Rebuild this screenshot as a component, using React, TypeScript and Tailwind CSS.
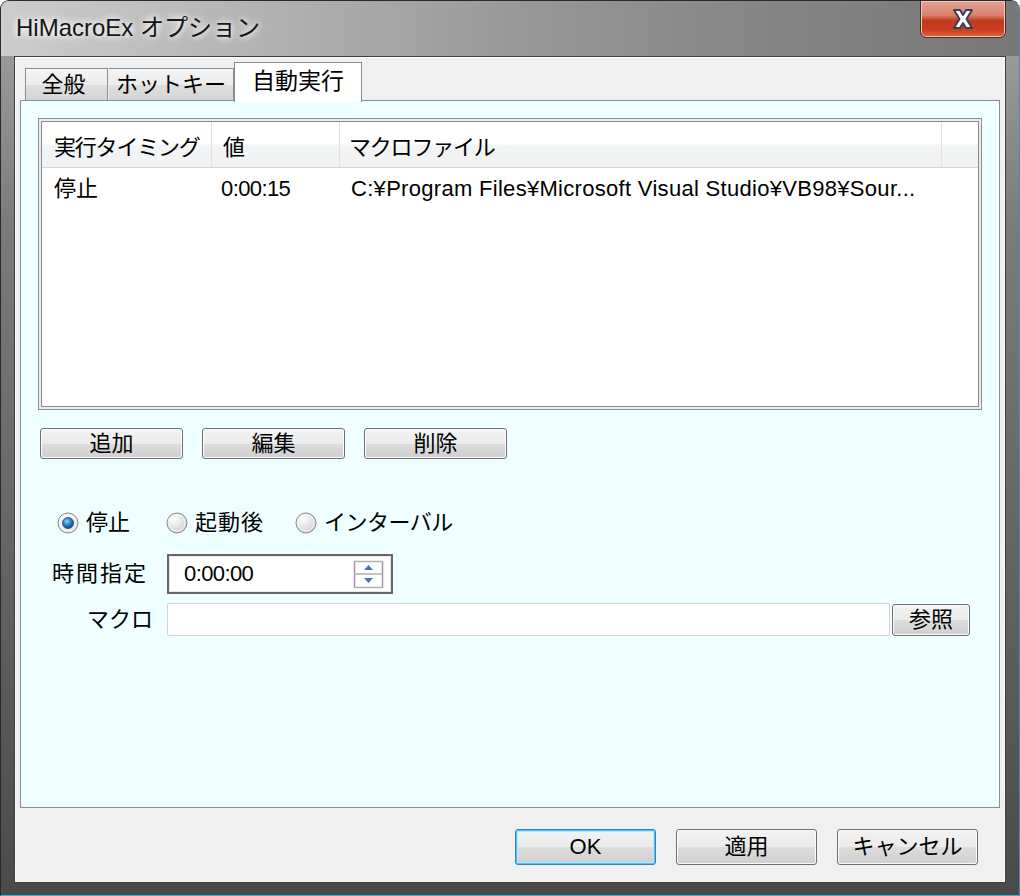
import React from "react";

const F = "font-['Liberation_Sans','Noto_Sans_CJK_JP',sans-serif]";

function Btn({
  children,
  className = "",
  focused = false,
}: {
  children: React.ReactNode;
  className?: string;
  focused?: boolean;
}) {
  return (
    <div
      className={`flex items-center justify-center rounded-[3px] border text-[22px] leading-none bg-[linear-gradient(180deg,#f2f2f2_0%,#ebebeb_50%,#dddddd_51%,#cfcfcf_100%)] ${
        focused
          ? "border-[#3c7fb1] shadow-[inset_0_0_0_1px_#48c6f5,inset_0_0_0_2px_#b9e6f9]"
          : "border-[#707070] shadow-[inset_0_0_0_1px_#fbfbfb]"
      } ${className}`}
    >
      {children}
    </div>
  );
}

function Radio({ checked }: { checked?: boolean }) {
  return (
    <svg width="22" height="22" viewBox="0 0 22 22" className="shrink-0">
      <defs>
        <radialGradient id={checked ? "rg1" : "rg0"} cx="0.35" cy="0.3" r="0.8">
          <stop offset="0" stopColor="#ffffff" />
          <stop offset="1" stopColor={checked ? "#dedede" : "#cccccc"} />
        </radialGradient>
        <radialGradient id="dot" cx="0.4" cy="0.35" r="0.7">
          <stop offset="0" stopColor="#8fd3ff" />
          <stop offset="0.5" stopColor="#2a7fc4" />
          <stop offset="1" stopColor="#0f3f78" />
        </radialGradient>
      </defs>
      <circle cx="11" cy="11" r="10" fill={`url(#${checked ? "rg1" : "rg0"})`} stroke="#8a8a8a" strokeWidth="1" />
      <circle cx="11" cy="11" r="8" fill="none" stroke="#ffffff" strokeOpacity="0.7" strokeWidth="1" />
      {checked && <circle cx="11" cy="11" r="5.5" fill="url(#dot)" stroke="#1b4a7c" strokeWidth="0.8" />}
    </svg>
  );
}

function Spin() {
  return (
    <svg width="32" height="32" viewBox="0 0 32 32" className="shrink-0">
      <line x1="1.5" y1="3" x2="1.5" y2="30" stroke="#9a9a9a" strokeWidth="1.5" />
      <line x1="29.5" y1="3" x2="29.5" y2="30" stroke="#9a9a9a" strokeWidth="1.5" />
      <line x1="1" y1="3.5" x2="30" y2="3.5" stroke="#b0b0b0" strokeWidth="1.5" />
      <line x1="1" y1="16" x2="30" y2="16" stroke="#b0b0b0" strokeWidth="1.5" />
      <line x1="1" y1="29.5" x2="30" y2="29.5" stroke="#b0b0b0" strokeWidth="1.5" />
      <polygon points="15.5,7 20,12 11,12" fill="#4a73b8" />
      <polygon points="15.5,25 20,20 11,20" fill="#4a73b8" />
    </svg>
  );
}

export default function App() {
  return (
    <div className={`w-[1020px] h-[896px] ${F} text-black`}>
      <div className="relative flex h-full w-full flex-col overflow-hidden rounded-t-[9px] border border-[#2a2a2a] border-b-[#2fb2dc] border-r-[#3a8fae] bg-[linear-gradient(180deg,#a3a3a3_0%,#7b7b7b_25%,#5f5f5f_70%,#4a4a4a_100%)]">
        {/* title bar */}
        <div className="flex h-[55px] shrink-0 items-start bg-[linear-gradient(90deg,#cdcdcd_0%,#b6b6b6_22%,#999999_50%,#858585_75%,#777777_100%)] pl-[15px] pt-[11px]">
          <span className="text-[24px] leading-[32px] text-[#151515] [text-shadow:0_0_6px_#ffffff,0_0_10px_#ffffff]">
            HiMacroEx オプション
          </span>
        </div>
        {/* close button */}
        <div className="absolute right-[13px] top-[-1px] flex h-[38px] w-[86px] items-center justify-center rounded-b-[6px] border border-[#4a2a24] bg-[linear-gradient(180deg,#e4a596_0%,#d8806c_40%,#c1391c_55%,#c8401f_80%,#e0643d_100%)] shadow-[inset_0_0_0_1px_#f0c8bc]">
          <svg width="34" height="26" viewBox="0 0 34 26">
            <path
              d="M8 4 L14 4 L17 9 L20 4 L26 4 L20.5 13 L26 22 L20 22 L17 17 L14 22 L8 22 L13.5 13 Z"
              fill="#ffffff"
              stroke="#3a3f5a"
              strokeWidth="2"
              strokeLinejoin="round"
            />
          </svg>
        </div>
        {/* client area */}
        <div className="mx-[13px] mb-[12px] flex flex-1 flex-col border border-[#3e3e3e] bg-[#f0f0f0] shadow-[inset_0_0_0_1px_#fafafa]">
          {/* tabs */}
          <div className="ml-[10px] mt-[5px] flex h-[38px] items-end">
            <div className="flex h-[32px] w-[83px] items-center justify-center border border-b-0 border-[#898c95] bg-[linear-gradient(180deg,#f4f4f4_0%,#ececec_50%,#dedede_51%,#d6d6d6_100%)] pr-[6px] text-[22px] leading-none">
              全般
            </div>
            <div className="ml-[1px] flex h-[32px] w-[125px] items-center justify-center border border-b-0 border-l-0 border-[#898c95] bg-[linear-gradient(180deg,#f4f4f4_0%,#ececec_50%,#dedede_51%,#d6d6d6_100%)] text-[22px] leading-none">
              ホットキー
            </div>
            <div className="relative z-10 -mb-[2px] flex h-[40px] w-[128px] items-center justify-center border border-b-0 border-[#898c95] bg-white pb-[2px] text-[23px] leading-none">
              自動実行
            </div>
          </div>
          {/* tab panel */}
          <div className="mx-[5px] flex h-[708px] flex-col border border-[#898c95] bg-[#effefe]">
            {/* list box */}
            <div className="ml-[17px] mt-[17px] h-[292px] w-[944px] border border-[#8e8e8e] bg-[#ebebeb] p-[2px]">
              <div className="flex h-full w-full flex-col border border-[#8a8a8a] bg-white">
                <div className="flex h-[46px] border-b border-[#d5d5d5] bg-[linear-gradient(180deg,#ffffff_0%,#ffffff_48%,#f3f4f5_52%,#f1f2f3_100%)] text-[22px] leading-none">
                  <div className="flex w-[170px] items-center border-r border-[#e2e2e2] pl-[12px] pt-[6px] tracking-[-1.2px]">
                    実行タイミング
                  </div>
                  <div className="flex w-[128px] items-center border-r border-[#e2e2e2] pl-[11px] pt-[6px]">値</div>
                  <div className="flex w-[602px] items-center border-r border-[#e2e2e2] pl-[9px] pt-[6px] tracking-[-1.2px]">
                    マクロファイル
                  </div>
                  <div className="flex-1" />
                </div>
                <div className="flex h-[40px] items-center pt-[2px] text-[22px] leading-none">
                  <div className="w-[170px] pl-[12px]">停止</div>
                  <div className="w-[128px] pl-[9px] tracking-[-0.6px]">0:00:15</div>
                  <div className="flex-1 whitespace-nowrap pl-[11px] tracking-[0.3px]">
                    C:¥Program Files¥Microsoft Visual Studio¥VB98¥Sour...
                  </div>
                </div>
              </div>
            </div>
            {/* buttons */}
            <div className="ml-[19px] mt-[18px] flex gap-[19px]">
              <Btn className="h-[31px] w-[143px]">追加</Btn>
              <Btn className="h-[31px] w-[143px]">編集</Btn>
              <Btn className="h-[31px] w-[143px]">削除</Btn>
            </div>
            {/* radios */}
            <div className="ml-[36px] mt-[52px] flex h-[24px] items-center text-[22px] leading-none">
              <div className="flex w-[109px] items-center gap-[7px]">
                <Radio checked />
                <span>停止</span>
              </div>
              <div className="flex w-[129px] items-center gap-[7px]">
                <Radio />
                <span className="tracking-[1px]">起動後</span>
              </div>
              <div className="flex items-center gap-[7px]">
                <Radio />
                <span className="tracking-[-0.5px]">インターバル</span>
              </div>
            </div>
            {/* time */}
            <div className="ml-[31px] mt-[19px] flex items-center">
              <div className="w-[115px] text-[22px] leading-none tracking-[2px]">時間指定</div>
              <div className="flex h-[40px] w-[226px] items-center justify-between border-2 border-[#666666] bg-white pl-[15px] pr-[6px] shadow-[inset_0_0_0_1px_#e8e8e8]">
                <span className="text-[22px] leading-none tracking-[-0.6px]">0:00:00</span>
                <Spin />
              </div>
            </div>
            {/* macro */}
            <div className="mt-[9px] flex items-center">
              <div className="w-[146px] pr-[14px] text-right text-[22px] leading-none">マクロ</div>
              <div className="h-[33px] w-[723px] rounded-[2px] border border-[#d4d4d4] bg-white" />
              <Btn className="ml-[2px] h-[32px] w-[78px]">参照</Btn>
            </div>
          </div>
          {/* bottom buttons */}
          <div className="mr-[27px] mt-[21px] flex justify-end gap-[20px]">
            <Btn focused className="h-[36px] w-[141px]">
              OK
            </Btn>
            <Btn className="h-[36px] w-[141px]">適用</Btn>
            <Btn className="h-[36px] w-[141px]">キャンセル</Btn>
          </div>
        </div>
      </div>
    </div>
  );
}
